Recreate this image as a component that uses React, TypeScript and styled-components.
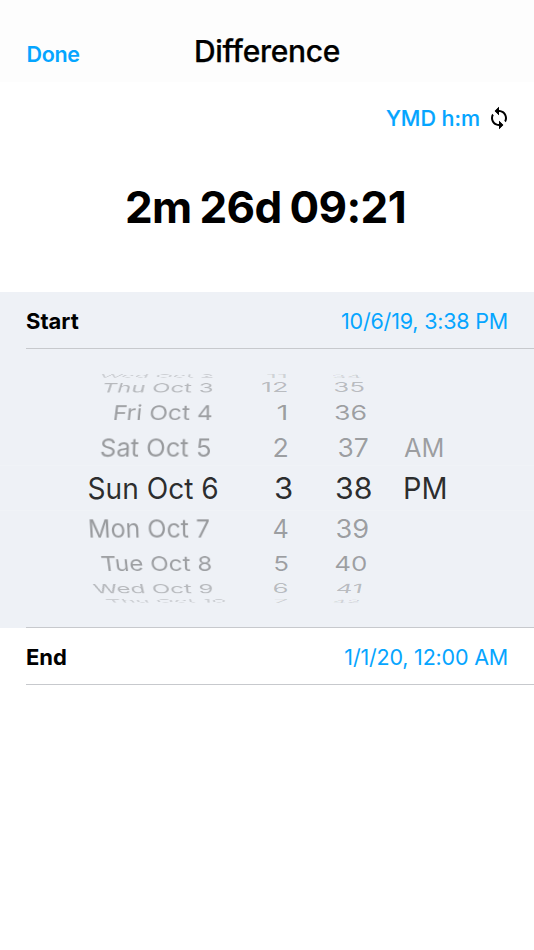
import React, { useLayoutEffect, useRef, useState } from "react";
import styled, { createGlobalStyle } from "styled-components";

const GlobalStyle = createGlobalStyle`
  * { box-sizing: border-box; }
  body { margin: 0; background: #ffffff; font-family: Inter, "Liberation Sans", sans-serif; }
`;

const BLUE = "#05a5ff";

const Screen = styled.main`
  width: 534px;
  height: 950px;
  display: flex;
  flex-direction: column;
  background: #ffffff;
  overflow: hidden;
`;

const NavBar = styled.header`
  height: 82px;
  flex: none;
  display: grid;
  grid-template-columns: 1fr auto 1fr;
  align-items: start;
  padding: 0 26px;
  background: #fdfdfd;
`;

const DoneButton = styled.button`
  justify-self: start;
  margin: 40px 0 0 0.5px;
  padding: 0;
  border: 0;
  background: none;
  font: 600 21.5px/28px Inter, sans-serif;
  letter-spacing: -0.3px;
  color: ${BLUE};
`;

const Title = styled.h1`
  margin: 31px 0 0;
  font: 500 30px/40px Inter, sans-serif;
  letter-spacing: -0.3px;
  color: #000;
  -webkit-text-stroke: 0.25px #000;
`;

const FormatButton = styled.button`
  align-self: flex-end;
  display: flex;
  align-items: center;
  gap: 7px;
  height: 30px;
  margin: 21px 23px 0 0;
  padding: 0;
  border: 0;
  background: none;
  font: 500 21.5px/30px Inter, sans-serif;
  letter-spacing: -0.05px;
  color: ${BLUE};
  -webkit-text-stroke: 0.15px ${BLUE};
`;

const Result = styled.output`
  display: block;
  margin-top: 44px;
  height: 60px;
  padding-right: 3px;
  text-align: center;
  font: 700 44px/60px Inter, sans-serif;
  letter-spacing: -0.6px;
  word-spacing: -2px;
  color: #000;
`;

const Panel = styled.section<{ $open?: boolean }>`
  background: ${(p) => (p.$open ? "#eef1f6" : "#ffffff")};
`;

const StartPanel = styled(Panel)`
  margin-top: 55px;
`;

const FieldRow = styled.div`
  height: 57px;
  margin-left: 26px;
  padding-right: 26px;
  padding-top: 1px;
  display: flex;
  align-items: center;
  justify-content: space-between;
  border-bottom: 1px solid #c7c9cd;
`;

const Label = styled.span`
  font: 700 22px/28px Inter, sans-serif;
  letter-spacing: 0;
  color: #000;
`;

const Value = styled.span`
  font: 400 21.5px/28px Inter, sans-serif;
  letter-spacing: -0.2px;
  color: ${BLUE};
`;

const Wheel = styled.div`
  height: 279px;
  padding-top: 24px;
  position: relative;
  &::after {
    content: "";
    position: absolute;
    left: 26px;
    right: 0;
    bottom: 0;
    height: 1px;
    background: #c7c9cd;
  }
`;

const WheelRow = styled.div<{ $height: number; $opacity: number; $selected?: boolean }>`
  height: ${(p) => p.$height}px;
  display: grid;
  grid-template-columns: 218px 74px 80px 162px;
  align-items: center;
  color: rgba(0, 0, 0, ${(p) => p.$opacity});
  box-shadow: ${(p) => (p.$selected ? "0 1px #f0f3f7, 0 -1px #f0f3f7" : "none")};
`;

const Slot = styled.div<{ $inset: number; $start?: boolean }>`
  height: 0;
  display: flex;
  align-items: center;
  justify-content: ${(p) => (p.$start ? "flex-start" : "flex-end")};
  padding-right: ${(p) => (p.$start ? 0 : p.$inset)}px;
  padding-left: ${(p) => (p.$start ? p.$inset : 0)}px;
  margin-right: ${(p) => (!p.$start && p.$inset < 0 ? p.$inset : 0)}px;
`;

const Face = styled.span<{ $size: number; $start?: boolean }>`
  font-size: ${(p) => p.$size}px;
  line-height: 36px;
  white-space: nowrap;
  transform-origin: ${(p) => (p.$start ? "left" : "right")} center;
`;

interface CellData {
  text: string;
  width: number;
  inset: number;
  skew?: number;
  taper?: number;
  start?: boolean;
}

/* One face of the drum: stretched to its width, squashed by its row and tapered away from the viewer. */
function Cell({ cell, squash, size }: { cell: CellData; squash: number; size: number }) {
  const ref = useRef<HTMLSpanElement>(null);
  const [stretch, setStretch] = useState(1);
  useLayoutEffect(() => {
    if (ref.current) setStretch(cell.width / ref.current.offsetWidth);
  }, [cell.width, size]);
  const taper = cell.taper ? `matrix3d(1,0,0,0, 0,1,0,${cell.taper}, 0,0,1,0, 0,0,0,1) ` : "";
  return (
    <Slot $inset={cell.inset} $start={cell.start}>
      <Face
        ref={ref}
        $size={size}
        $start={cell.start}
        style={{ transform: `${taper}skewX(${cell.skew ?? 0}deg) scale(${stretch}, ${squash})` }}
      >
        {cell.text}
      </Face>
    </Slot>
  );
}

interface RowData {
  height: number;
  opacity: number;
  squash: number;
  size?: number;
  cells: CellData[];
}

const rows: RowData[] = [
  { height: 6, opacity: 0.14, squash: 0.17, cells: [
    { text: "Wed Oct 2", width: 114, inset: 4, taper: -0.0075 },
    { text: "11", width: 22, inset: 4 },
    { text: "34", width: 31, inset: 10, skew: 20 },
  ] },
  { height: 18, opacity: 0.23, squash: 0.49, cells: [
    { text: "Thu Oct 3", width: 111, inset: 4.5, taper: -0.0032 },
    { text: "12", width: 27, inset: 4 },
    { text: "35", width: 32, inset: 7 },
  ] },
  { height: 32, opacity: 0.34, squash: 0.78, cells: [
    { text: "Fri Oct 4", width: 100, inset: 5.5, taper: -0.0013 },
    { text: "1", width: 12.5, inset: 3.5 },
    { text: "36", width: 33, inset: 4.5 },
  ] },
  { height: 37, opacity: 0.36, squash: 0.96, cells: [
    { text: "Sat Oct 5", width: 111, inset: 6.5, taper: -0.0005 },
    { text: "2", width: 16.5, inset: 3 },
    { text: "37", width: 31.5, inset: 3.5 },
    { text: "AM", width: 40, inset: 32, start: true },
  ] },
  { height: 44, opacity: 0.83, squash: 1, size: 29.5, cells: [
    { text: "Sun Oct 6", width: 131.5, inset: -1 },
    { text: "3", width: 19, inset: -1 },
    { text: "38", width: 37, inset: -0.5 },
    { text: "PM", width: 45, inset: 30.5, start: true },
  ] },
  { height: 38, opacity: 0.36, squash: 0.96, cells: [
    { text: "Mon Oct 7", width: 122, inset: 8, taper: 0.0005 },
    { text: "4", width: 16.5, inset: 3.5 },
    { text: "39", width: 33.5, inset: 3 },
  ] },
  { height: 32, opacity: 0.34, squash: 0.78, cells: [
    { text: "Tue Oct 8", width: 111, inset: 5.5, taper: 0.0013 },
    { text: "5", width: 16, inset: 3 },
    { text: "40", width: 33, inset: 4.5 },
  ] },
  { height: 18, opacity: 0.23, squash: 0.49, cells: [
    { text: "Wed Oct 9", width: 119, inset: 4.5, taper: 0.0032 },
    { text: "6", width: 16, inset: 3.5 },
    { text: "41", width: 27, inset: 9, skew: -12 },
  ] },
  { height: 6, opacity: 0.14, squash: 0.17, cells: [
    { text: "Thu Oct 10", width: 120, inset: -8, taper: 0.0075 },
    { text: "7", width: 16, inset: 3.5 },
    { text: "42", width: 29, inset: 11, skew: -20 },
  ] },
];

function CycleIcon() {
  return (
    <svg width="24" height="24" viewBox="0 0 24 24" fill="#000">
      <path d="M12 4V1L8 5l4 4V6c3.31 0 6 2.69 6 6 0 1.01-.25 1.97-.7 2.8l1.46 1.46C19.54 15.03 20 13.57 20 12c0-4.42-3.58-8-8-8zm0 14c-3.31 0-6-2.69-6-6 0-1.01.25-1.97.7-2.8L5.24 7.74C4.46 8.97 4 10.43 4 12c0 4.42 3.58 8 8 8v3l4-4-4-4v3z" />
      <path d="M7.6 5 12 .7v8.6zM16.4 19 12 14.7v8.6z" />
    </svg>
  );
}

export default function App() {
  return (
    <>
      <GlobalStyle />
      <Screen>
        <NavBar>
          <DoneButton>Done</DoneButton>
          <Title>Difference</Title>
        </NavBar>
        <FormatButton>
          YMD h:m
          <CycleIcon />
        </FormatButton>
        <Result>2m 26d 09:21</Result>
        <StartPanel $open>
          <FieldRow>
            <Label>Start</Label>
            <Value>10/6/19, 3:38 PM</Value>
          </FieldRow>
          <Wheel>
            {rows.map((row, i) => (
              <WheelRow key={i} $height={row.height} $opacity={row.opacity} $selected={i === 4}>
                {row.cells.map((cell) => (
                  <Cell key={cell.text} cell={cell} squash={row.squash} size={row.size ?? 26} />
                ))}
              </WheelRow>
            ))}
          </Wheel>
        </StartPanel>
        <Panel>
          <FieldRow>
            <Label>End</Label>
            <Value>1/1/20, 12:00 AM</Value>
          </FieldRow>
        </Panel>
      </Screen>
    </>
  );
}
